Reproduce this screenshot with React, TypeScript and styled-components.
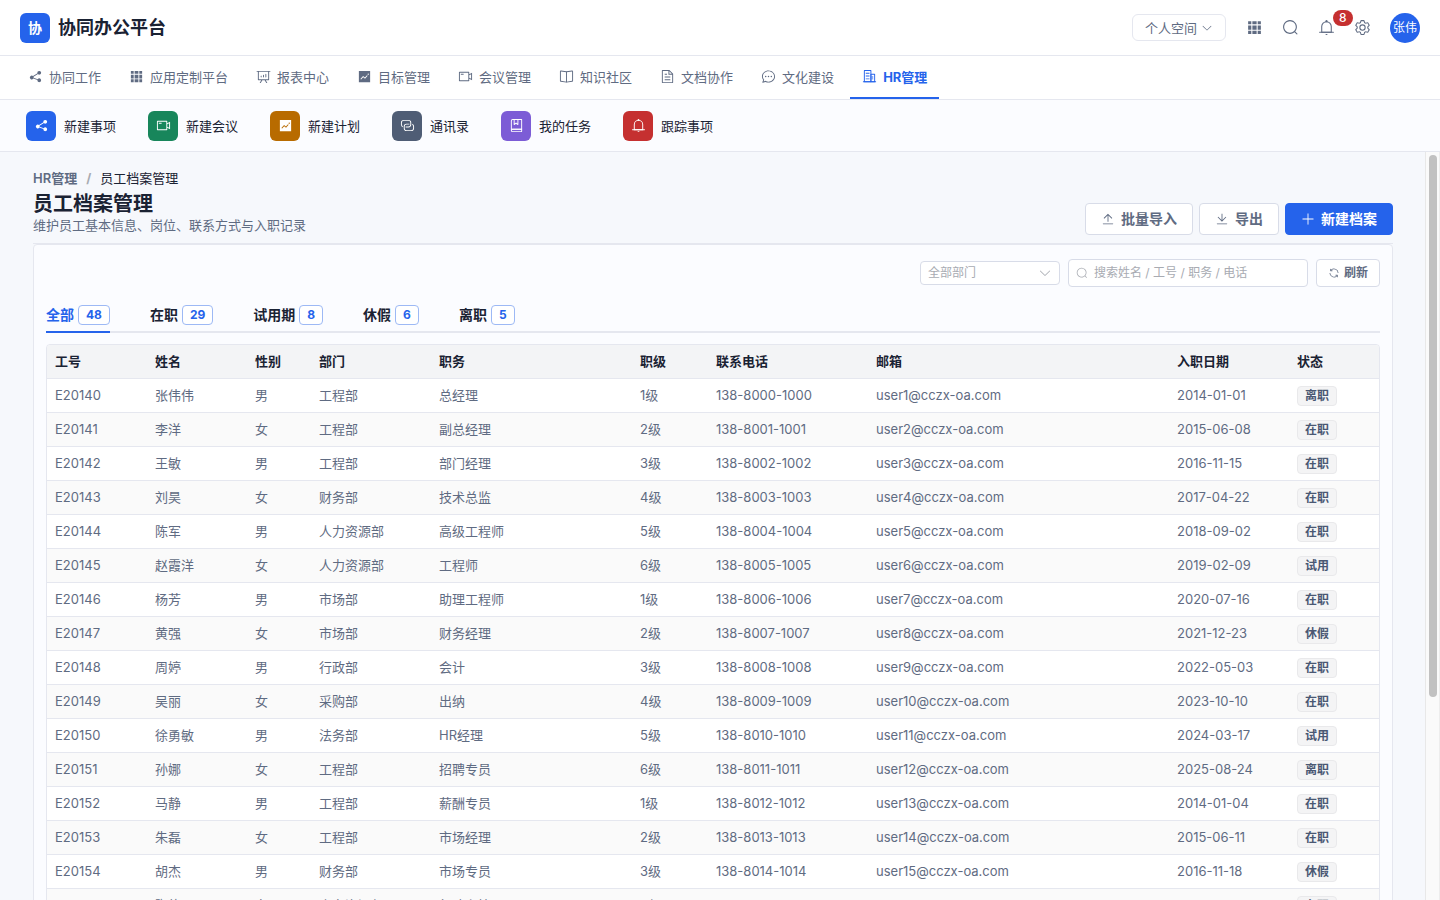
import React, { useState } from "react";
import styled, { createGlobalStyle, css } from "styled-components";

const color = {
  primary: "#2563eb",
  ink: "#1a2233",
  text: "#5f6b82",
  line: "#e5e7ef",
  control: "#d8dce8",
  hint: "#a8abb2",
  surface: "#fbfcff",
  page: "#f6f8fc",
};

const GlobalStyle = createGlobalStyle`
  *, *::before, *::after { box-sizing: border-box; }
  body {
    margin: 0;
    color: ${color.ink};
    background: ${color.page};
    font-family: Inter, "Noto Sans CJK SC", sans-serif;
    font-size: 13px;
    line-height: 20px;
  }
  button, input, select { font: inherit; color: inherit; margin: 0; }
  button { cursor: pointer; }
  a { color: inherit; text-decoration: none; }
`;

/* ---------- icons ---------- */

const icons = {
  share: [
    "m679.872 348.8-301.76 188.608a127.808 127.808 0 0 1 5.12 52.16l279.936 104.96a128 128 0 1 1-22.464 59.904l-279.872-104.96a128 128 0 1 1-16.64-166.272l301.696-188.608a128 128 0 1 1 33.92 54.272z",
  ],
  grid: [
    "M640 384v256H384V384h256zm64 0h192v256H704V384zm-64 512H384V704h256v192zm64 0V704h192v192H704zm-64-768v192H384V128h256zm64 0h192v192H704V128zM320 384v256H128V384h192zm0 512H128V704h192v192zm0-768v192H128V128h192z",
  ],
  board: [
    "m665.216 768 110.848 192h-73.856L591.36 768H433.024L322.176 960H248.32l110.848-192H160a32 32 0 0 1-32-32V192H64a32 32 0 0 1 0-64h896a32 32 0 1 1 0 64h-64v544a32 32 0 0 1-32 32H665.216zM832 192H192v512h640V192zM352 448a32 32 0 0 1 32 32v64a32 32 0 0 1-64 0v-64a32 32 0 0 1 32-32zm160-64a32 32 0 0 1 32 32v128a32 32 0 0 1-64 0V416a32 32 0 0 1 32-32zm160-64a32 32 0 0 1 32 32v192a32 32 0 1 1-64 0V352a32 32 0 0 1 32-32z",
  ],
  trend: [
    "M128 896V128h768v768H128zm291.712-327.296 128 102.4 180.16-201.792-47.744-42.624-139.84 156.608-128-102.4-180.16 201.792 47.744 42.624 139.84-156.608zM816 352a48 48 0 1 0-96 0 48 48 0 0 0 96 0z",
  ],
  video: [
    "M704 768V256H128v512h576zm64-416 192-96v512l-192-96v128a32 32 0 0 1-32 32H96a32 32 0 0 1-32-32V224a32 32 0 0 1 32-32h640a32 32 0 0 1 32 32v128zm0 71.552v176.896l128 64V359.552l-128 64zM192 320h192v64H192v-64z",
  ],
  book: [
    "m512 863.36 384-54.848v-638.72L525.568 222.72a96 96 0 0 1-27.136 0L128 169.792v638.72l384 54.848zM137.024 106.432l370.432 52.928a32 32 0 0 0 9.088 0l370.432-52.928A64 64 0 0 1 960 169.792v638.72a64 64 0 0 1-54.976 63.36l-388.48 55.488a32 32 0 0 1-9.088 0l-388.48-55.488A64 64 0 0 1 64 808.512v-638.72a64 64 0 0 1 73.024-63.36z",
    "M480 192h64v704h-64z",
  ],
  document: [
    "M832 384H576V128H192v768h640V384zm-26.496-64L640 154.496V320h165.504zM160 64h480l256 256v608a32 32 0 0 1-32 32H160a32 32 0 0 1-32-32V96a32 32 0 0 1 32-32zm160 448h384v64H320v-64zm0-192h160v64H320v-64zm0 384h384v64H320v-64z",
  ],
  chat: [
    "m174.72 855.68 135.296-45.12 23.68 11.84C388.096 849.536 448.576 864 512 864c211.84 0 384-166.784 384-352S723.84 160 512 160 128 326.784 128 512c0 69.12 24.96 139.264 70.848 199.232l22.08 28.8-46.272 115.584zm-45.248 82.56A32 32 0 0 1 89.6 896l58.368-145.92C94.72 680.32 64 596.864 64 512 64 299.904 256 96 512 96s448 203.904 448 416-192 416-448 416a461.056 461.056 0 0 1-206.912-48.384l-175.616 58.56z",
    "M512 563.2a51.2 51.2 0 1 1 0-102.4 51.2 51.2 0 0 1 0 102.4zm192 0a51.2 51.2 0 1 1 0-102.4 51.2 51.2 0 0 1 0 102.4zm-384 0a51.2 51.2 0 1 1 0-102.4 51.2 51.2 0 0 1 0 102.4z",
  ],
  office: [
    "M192 128v704h384V128H192zm-32-64h448a32 32 0 0 1 32 32v768a32 32 0 0 1-32 32H160a32 32 0 0 1-32-32V96a32 32 0 0 1 32-32z",
    "M256 256h256v64H256v-64zm0 192h256v64H256v-64zm0 192h256v64H256v-64zm384-128h128v64H640v-64zm0 128h128v64H640v-64zM64 832h896v64H64v-64z",
    "M640 384v448h192V384H640zm-32-64h256a32 32 0 0 1 32 32v512a32 32 0 0 1-32 32H608a32 32 0 0 1-32-32V352a32 32 0 0 1 32-32z",
  ],
  bell: [
    "M512 64a64 64 0 0 1 64 64v64H448v-64a64 64 0 0 1 64-64z",
    "M256 768h512V448a256 256 0 1 0-512 0v320zm256-640a320 320 0 0 1 320 320v384H192V448a320 320 0 0 1 320-320z",
    "M96 768h832q32 0 32 32t-32 32H96q-32 0-32-32t32-32zm352 128h128a64 64 0 0 1-128 0z",
  ],
  connection: [
    "M640 384v64H448a128 128 0 0 0-128 128v128a128 128 0 0 0 128 128h320a128 128 0 0 0 128-128V576a128 128 0 0 0-64-110.848V394.88c74.56 26.368 128 97.472 128 181.056v128a192 192 0 0 1-192 192H448a192 192 0 0 1-192-192V576a192 192 0 0 1 192-192h192z",
    "M384 640v-64h192a128 128 0 0 0 128-128V320a128 128 0 0 0-128-128H256a128 128 0 0 0-128 128v128a128 128 0 0 0 64 110.848v70.272A192.064 192.064 0 0 1 64 448V320a192 192 0 0 1 192-192h320a192 192 0 0 1 192 192v128a192 192 0 0 1-192 192H384z",
  ],
  collection: [
    "M192 736h640V128H256a64 64 0 0 0-64 64v544zm64-672h608a32 32 0 0 1 32 32v672a32 32 0 0 1-32 32H160l-32 57.536V192A128 128 0 0 1 256 64z",
    "M240 800a48 48 0 1 0 0 96h592v-96H240zm0-64h656v160a64 64 0 0 1-64 64H240a112 112 0 0 1 0-224zm144-608v250.88l96-76.8 96 76.8V128H384zm-64-64h320v381.44a32 32 0 0 1-51.968 24.96L480 384l-108.032 86.4A32 32 0 0 1 320 445.44V64z",
  ],
  search: [
    "m795.904 750.72 124.992 124.928a32 32 0 0 1-45.248 45.248L750.656 795.904a416 416 0 1 1 45.248-45.248zM480 832a352 352 0 1 0 0-704 352 352 0 0 0 0 704z",
  ],
  setting: [
    "M600.704 64a32 32 0 0 1 30.464 22.208l35.2 109.376c14.784 7.232 28.928 15.36 42.432 24.512l112.384-24.192a32 32 0 0 1 34.432 15.36L944.32 364.8a32 32 0 0 1-4.032 37.504l-77.12 85.12a357.12 357.12 0 0 1 0 49.024l77.12 85.248a32 32 0 0 1 4.032 37.504l-88.704 153.6a32 32 0 0 1-34.432 15.296L708.8 803.904c-13.44 9.088-27.648 17.28-42.368 24.512l-35.264 109.376A32 32 0 0 1 600.704 960H423.296a32 32 0 0 1-30.464-22.208L357.696 828.48a351.616 351.616 0 0 1-42.56-24.64l-112.32 24.256a32 32 0 0 1-34.432-15.36L79.68 659.2a32 32 0 0 1 4.032-37.504l77.12-85.248a357.12 357.12 0 0 1 0-48.896l-77.12-85.248A32 32 0 0 1 79.68 364.8l88.704-153.6a32 32 0 0 1 34.432-15.296l112.32 24.256c13.568-9.152 27.776-17.408 42.56-24.64l35.2-109.312A32 32 0 0 1 423.232 64H600.64zm-23.424 64H446.72l-36.352 113.088-24.512 11.968a294.113 294.113 0 0 0-34.816 20.096l-22.656 15.36-116.224-25.088-65.28 113.152 79.68 88.192-1.92 27.136a293.12 293.12 0 0 0 0 40.192l1.92 27.136-79.808 88.192 65.344 113.152 116.224-25.024 22.656 15.296a294.113 294.113 0 0 0 34.816 20.096l24.512 11.968L446.72 896h130.688l36.48-113.152 24.448-11.904a288.282 288.282 0 0 0 34.752-20.096l22.592-15.296 116.288 25.024 65.28-113.152-79.744-88.192 1.92-27.136a293.12 293.12 0 0 0 0-40.256l-1.92-27.136 79.808-88.128-65.344-113.152-116.288 24.96-22.592-15.232a287.616 287.616 0 0 0-34.752-20.096l-24.448-11.904L577.344 128zM512 320a192 192 0 1 1 0 384 192 192 0 0 1 0-384zm0 64a128 128 0 1 0 0 256 128 128 0 0 0 0-256z",
  ],
  down: [
    "M831.872 340.864 512 652.672 192.128 340.864a30.592 30.592 0 0 0-42.752 0 29.12 29.12 0 0 0 0 41.6L489.664 714.24a32 32 0 0 0 44.672 0l340.288-331.712a29.12 29.12 0 0 0 0-41.728 30.592 30.592 0 0 0-42.752 0z",
  ],
  upload: [
    "M160 832h704a32 32 0 1 1 0 64H160a32 32 0 1 1 0-64zm384-578.304V704h-64V247.296L237.248 490.048 192 444.8 508.8 128l316.8 316.8-45.312 45.248L544 253.696z",
  ],
  download: [
    "M160 832h704a32 32 0 1 1 0 64H160a32 32 0 1 1 0-64zm384-253.696 236.288-236.352 45.248 45.248L508.8 704 192 387.2l45.248-45.248L480 584.704V128h64v450.304z",
  ],
  plus: [
    "M480 480V128a32 32 0 0 1 64 0v352h352a32 32 0 1 1 0 64H544v352a32 32 0 1 1-64 0V544H128a32 32 0 0 1 0-64h352z",
  ],
  refresh: [
    "M771.776 794.88A384 384 0 0 1 128 512h64a320 320 0 0 0 555.712 216.448H654.72a32 32 0 1 1 0-64h149.056a32 32 0 0 1 32 32v148.928a32 32 0 1 1-64 0v-50.56zM276.288 295.616h92.992a32 32 0 0 1 0 64H220.16a32 32 0 0 1-32-32V178.56a32 32 0 0 1 64 0v50.56A384 384 0 0 1 896.128 512h-64a320 320 0 0 0-555.776-216.384z",
  ],
};

type IconName = keyof typeof icons;

const Svg = styled.svg`
  display: block;
  flex: none;
`;

function Icon({ name, size }: { name: IconName; size: number }) {
  return (
    <Svg width={size} height={size} viewBox="0 0 1024 1024" fill="currentColor" aria-hidden="true">
      {icons[name].map((d) => (
        <path key={d} d={d} />
      ))}
    </Svg>
  );
}

/* ---------- shell ---------- */

const Shell = styled.div`
  display: flex;
  flex-direction: column;
  height: 100vh;
`;

const TopBar = styled.header`
  display: flex;
  align-items: center;
  justify-content: space-between;
  flex: none;
  height: 56px;
  padding: 0 20px;
  background: #fff;
  border-bottom: 1px solid ${color.line};
`;

const Brand = styled.div`
  display: flex;
  align-items: center;
  gap: 8px;
  font-size: 18px;
  line-height: 28px;
  font-weight: 600;
`;

const BrandMark = styled.span`
  display: grid;
  place-items: center;
  width: 30px;
  height: 30px;
  border-radius: 6px;
  background: ${color.primary};
  color: #fff;
  font-size: 14px;
  font-weight: 700;
`;

const TopActions = styled.div`
  display: flex;
  align-items: center;
  gap: 12px;
`;

const SpaceButton = styled.button`
  display: flex;
  align-items: center;
  gap: 4px;
  height: 27px;
  padding: 0 12px;
  border: 1px solid ${color.line};
  border-radius: 6px;
  background: #fff;
  color: ${color.text};
`;

const IconGroup = styled.div`
  display: flex;
  gap: 4px;
`;

const IconButton = styled.button`
  position: relative;
  display: grid;
  place-items: center;
  width: 32px;
  height: 32px;
  padding: 0;
  border: 0;
  background: none;
  color: ${color.text};
`;

const CountBadge = styled.span`
  position: absolute;
  top: -2px;
  left: 23px;
  height: 16px;
  padding: 0 6px;
  border-radius: 8px;
  background: #c53030;
  color: #fff;
  font-size: 12px;
  line-height: 16px;
  font-weight: 500;
`;

const Avatar = styled.button`
  width: 30px;
  height: 30px;
  padding: 0;
  border: 0;
  border-radius: 50%;
  background: ${color.primary};
  color: #fff;
  font-size: 12px;
  white-space: nowrap;
`;

const Nav = styled.nav`
  display: flex;
  flex: none;
  gap: 4px;
  height: 44px;
  padding: 0 16px;
  background: #fff;
  border-bottom: 1px solid ${color.line};
`;

const NavLink = styled.a<{ $active?: boolean }>`
  display: flex;
  align-items: center;
  gap: 6px;
  padding: 0 12px;
  border-bottom: 2px solid ${(p) => (p.$active ? color.primary : "transparent")};
  color: ${(p) => (p.$active ? color.primary : color.text)};
  font-weight: ${(p) => (p.$active ? 700 : 400)};
  white-space: nowrap;
`;

const QuickBar = styled.div`
  display: flex;
  align-items: center;
  flex: none;
  gap: 32px;
  height: 52px;
  padding: 0 26px;
  background: ${color.surface};
  border-bottom: 1px solid ${color.line};
`;

const QuickButton = styled.button`
  display: flex;
  align-items: center;
  gap: 8px;
  padding: 0;
  border: 0;
  background: none;
  white-space: nowrap;
`;

const QuickIcon = styled.span<{ $tone: string }>`
  display: grid;
  place-items: center;
  width: 30px;
  height: 30px;
  border-radius: 6px;
  background: ${(p) => p.$tone};
  color: #fff;
`;

const Body = styled.div`
  display: flex;
  flex: 1;
  min-height: 0;
`;

const Scroller = styled.main`
  flex: 1;
  min-width: 0;
  padding: 16px 32px 16px 33px;
  overflow-y: auto;
  scrollbar-width: none;
`;

const ScrollTrack = styled.div`
  flex: none;
  width: 15px;
  padding: 3px;
  background: #fafafa;
  border-left: 1px solid #e8e8e8;
  border-right: 1px solid #ededed;
`;

const ScrollThumb = styled.div`
  height: 73%;
  width: 8px;
  border-radius: 4px;
  background: #c1c1c1;
`;

const Page = styled.div`
  max-width: 1360px;
  margin: 0 auto;
`;

/* ---------- page header ---------- */

const PageHead = styled.div`
  display: flex;
  align-items: flex-end;
  justify-content: space-between;
  padding-bottom: 8px;
  border-bottom: 1px solid ${color.line};
`;

const Crumbs = styled.nav`
  display: flex;
  gap: 9px;
`;

const CrumbLink = styled.a`
  color: ${color.text};
  font-weight: 600;
`;

const CrumbSlash = styled.span`
  color: ${color.hint};
  font-weight: 700;
`;

const Title = styled.h1`
  margin: 4px 0 0;
  font-size: 20px;
  line-height: 24px;
  font-weight: 600;
`;

const Summary = styled.p`
  margin: 0 0 1px;
  line-height: 18px;
  color: ${color.text};
`;

const ButtonRow = styled.div`
  display: flex;
  gap: 6px;
`;

const Button = styled.button<{ $primary?: boolean; $small?: boolean }>`
  display: flex;
  align-items: center;
  justify-content: center;
  gap: 6px;
  height: 32px;
  padding: 0 15px;
  border: 1px solid ${color.control};
  border-radius: 4px;
  background: #fff;
  color: ${color.text};
  font-size: 14px;
  font-weight: 600;
  white-space: nowrap;
  ${(p) =>
    p.$primary &&
    css`
      border-color: ${color.primary};
      background: ${color.primary};
      color: #fff;
    `}
  ${(p) =>
    p.$small &&
    css`
      gap: 4px;
      height: 28px;
      padding: 0 11px;
      font-size: 12px;
    `}
`;

/* ---------- card ---------- */

const Card = styled.section`
  padding: 14px 12px;
  border: 1px solid ${color.line};
  border-radius: 4px;
  background: ${color.surface};
`;

const Filters = styled.div`
  display: flex;
  align-items: center;
  justify-content: flex-end;
  gap: 8px;
  font-size: 12px;
`;

const SelectBox = styled.div`
  display: grid;
  align-items: center;
  width: 140px;
  color: ${color.hint};

  select,
  svg {
    grid-area: 1 / 1;
  }
  svg {
    justify-self: end;
    margin-right: 8px;
    pointer-events: none;
  }
`;

const Select = styled.select`
  width: 100%;
  height: 24px;
  padding: 0 7px;
  border: 1px solid ${color.control};
  border-radius: 4px;
  background: #fff;
  appearance: none;
`;

const SearchBox = styled.label`
  display: flex;
  align-items: center;
  gap: 6px;
  width: 240px;
  height: 28px;
  padding: 0 7px;
  border: 1px solid ${color.control};
  border-radius: 4px;
  background: #fff;
  color: ${color.hint};
`;

const SearchInput = styled.input`
  flex: 1;
  min-width: 0;
  padding: 0;
  border: 0;
  outline: 0;
  background: none;
  color: ${color.ink};

  &::placeholder {
    color: ${color.hint};
    opacity: 1;
  }
`;

const Tabs = styled.div`
  display: flex;
  gap: 40px;
  height: 34px;
  margin: 12px 0 11px;
  box-shadow: inset 0 -2px 0 ${color.line};
`;

const Tab = styled.button<{ $active: boolean }>`
  display: flex;
  align-items: center;
  gap: 4px;
  padding: 0;
  border: 0;
  border-bottom: 2px solid ${(p) => (p.$active ? color.primary : "transparent")};
  background: none;
  color: ${(p) => (p.$active ? color.primary : color.ink)};
  font-size: 14px;
  font-weight: 600;
`;

const TabCount = styled.span`
  height: 20px;
  padding: 0 7px;
  border: 1px solid #9db9f5;
  border-radius: 4px;
  background: #fff;
  color: ${color.primary};
  font-size: 12px;
  line-height: 18px;
  font-weight: 700;
`;

const TableFrame = styled.div`
  overflow: hidden;
  border: 1px solid ${color.line};
  border-radius: 4px;
`;

const Table = styled.table`
  width: 100%;
  table-layout: fixed;
  border-collapse: separate;
  border-spacing: 0;
`;

const Column = styled.col<{ $width?: number }>`
  width: ${(p) => (p.$width ? `${p.$width}px` : "auto")};
`;

const HeadCell = styled.th`
  height: 34px;
  padding: 0 8px 2px;
  border-bottom: 1px solid ${color.line};
  background: #f3f4f6;
  font-weight: 600;
  text-align: left;
`;

const Cell = styled.td`
  height: 34px;
  padding: 0 8px 2px;
  border-bottom: 1px solid ${color.line};
  color: ${color.text};
  white-space: nowrap;
`;

const StatusCell = styled(Cell)`
  padding-bottom: 0;
`;

const Row = styled.tr`
  background: #fff;

  &:nth-child(even) {
    background: #fafafa;
  }
`;

const StatusTag = styled.span`
  display: block;
  width: fit-content;
  height: 20px;
  padding: 0 7px;
  border: 1px solid #e9e9eb;
  border-radius: 4px;
  background: #f4f4f5;
  color: #4a5873;
  font-size: 12px;
  line-height: 18px;
  font-weight: 600;
`;

/* ---------- data ---------- */

const navItems: { label: string; icon: IconName }[] = [
  { label: "协同工作", icon: "share" },
  { label: "应用定制平台", icon: "grid" },
  { label: "报表中心", icon: "board" },
  { label: "目标管理", icon: "trend" },
  { label: "会议管理", icon: "video" },
  { label: "知识社区", icon: "book" },
  { label: "文档协作", icon: "document" },
  { label: "文化建设", icon: "chat" },
  { label: "HR管理", icon: "office" },
];

const quickItems: { label: string; icon: IconName; tone: string }[] = [
  { label: "新建事项", icon: "share", tone: "#2563eb" },
  { label: "新建会议", icon: "video", tone: "#18865b" },
  { label: "新建计划", icon: "trend", tone: "#b86b00" },
  { label: "通讯录", icon: "connection", tone: "#4f5d75" },
  { label: "我的任务", icon: "collection", tone: "#7c5cd6" },
  { label: "跟踪事项", icon: "bell", tone: "#c53030" },
];

const tabs = [
  { label: "全部", count: 48 },
  { label: "在职", count: 29 },
  { label: "试用期", count: 8 },
  { label: "休假", count: 6 },
  { label: "离职", count: 5 },
];

const columns: { label: string; width?: number }[] = [
  { label: "工号", width: 100 },
  { label: "姓名", width: 100 },
  { label: "性别", width: 64 },
  { label: "部门", width: 120 },
  { label: "职务", width: 201 },
  { label: "职级", width: 76 },
  { label: "联系电话", width: 160 },
  { label: "邮箱" },
  { label: "入职日期", width: 120 },
  { label: "状态", width: 90 },
];

const people = [
  ["张伟伟", "工程部", "总经理", "2014-01-01", "离职"],
  ["李洋", "工程部", "副总经理", "2015-06-08", "在职"],
  ["王敏", "工程部", "部门经理", "2016-11-15", "在职"],
  ["刘昊", "财务部", "技术总监", "2017-04-22", "在职"],
  ["陈军", "人力资源部", "高级工程师", "2018-09-02", "在职"],
  ["赵霞洋", "人力资源部", "工程师", "2019-02-09", "试用"],
  ["杨芳", "市场部", "助理工程师", "2020-07-16", "在职"],
  ["黄强", "市场部", "财务经理", "2021-12-23", "休假"],
  ["周婷", "行政部", "会计", "2022-05-03", "在职"],
  ["吴丽", "采购部", "出纳", "2023-10-10", "在职"],
  ["徐勇敏", "法务部", "HR经理", "2024-03-17", "试用"],
  ["孙娜", "工程部", "招聘专员", "2025-08-24", "离职"],
  ["马静", "工程部", "薪酬专员", "2014-01-04", "在职"],
  ["朱磊", "工程部", "市场经理", "2015-06-11", "在职"],
  ["胡杰", "财务部", "市场专员", "2016-11-18", "休假"],
  ["陶艳昊", "人力资源部", "行政主管", "2017-04-25", "在职"],
];

const rows = people.map(([name, dept, job, date, status], i) => ({
  id: `E${20140 + i}`,
  name,
  gender: i % 2 ? "女" : "男",
  dept,
  job,
  level: `${(i % 6) + 1}级`,
  phone: `138-${8000 + i}-${1000 + i}`,
  email: `user${i + 1}@cczx-oa.com`,
  date,
  status,
}));

export default function App() {
  const [tab, setTab] = useState("全部");

  return (
    <>
      <GlobalStyle />
      <Shell>
        <TopBar>
          <Brand>
            <BrandMark>协</BrandMark>
            协同办公平台
          </Brand>
          <TopActions>
            <SpaceButton type="button">
              个人空间
              <Icon name="down" size={12} />
            </SpaceButton>
            <IconGroup>
              <IconButton type="button" aria-label="应用">
                <Icon name="grid" size={17} />
              </IconButton>
              <IconButton type="button" aria-label="搜索">
                <Icon name="search" size={17} />
              </IconButton>
              <IconButton type="button" aria-label="通知">
                <Icon name="bell" size={17} />
                <CountBadge>8</CountBadge>
              </IconButton>
              <IconButton type="button" aria-label="设置">
                <Icon name="setting" size={17} />
              </IconButton>
            </IconGroup>
            <Avatar type="button">张伟</Avatar>
          </TopActions>
        </TopBar>

        <Nav aria-label="主导航">
          {navItems.map((item) => (
            <NavLink key={item.label} href="#" $active={item.label === "HR管理"}>
              <Icon name={item.icon} size={15} />
              {item.label}
            </NavLink>
          ))}
        </Nav>

        <QuickBar>
          {quickItems.map((item) => (
            <QuickButton key={item.label} type="button">
              <QuickIcon $tone={item.tone}>
                <Icon name={item.icon} size={15} />
              </QuickIcon>
              {item.label}
            </QuickButton>
          ))}
        </QuickBar>

        <Body>
          <Scroller>
            <Page>
              <PageHead>
                <div>
                  <Crumbs aria-label="面包屑">
                    <CrumbLink href="#">HR管理</CrumbLink>
                    <CrumbSlash>/</CrumbSlash>
                    <span>员工档案管理</span>
                  </Crumbs>
                  <Title>员工档案管理</Title>
                  <Summary>维护员工基本信息、岗位、联系方式与入职记录</Summary>
                </div>
                <ButtonRow>
                  <Button type="button">
                    <Icon name="upload" size={14} />
                    批量导入
                  </Button>
                  <Button type="button">
                    <Icon name="download" size={14} />
                    导出
                  </Button>
                  <Button type="button" $primary>
                    <Icon name="plus" size={14} />
                    新建档案
                  </Button>
                </ButtonRow>
              </PageHead>

              <Card>
                <Filters>
                  <SelectBox>
                    <Select aria-label="部门" defaultValue="">
                      <option value="">全部部门</option>
                      <option>工程部</option>
                      <option>财务部</option>
                      <option>人力资源部</option>
                      <option>市场部</option>
                    </Select>
                    <Icon name="down" size={14} />
                  </SelectBox>
                  <SearchBox>
                    <Icon name="search" size={12} />
                    <SearchInput type="text" aria-label="搜索员工" placeholder="搜索姓名 / 工号 / 职务 / 电话" />
                  </SearchBox>
                  <Button type="button" $small>
                    <Icon name="refresh" size={12} />
                    刷新
                  </Button>
                </Filters>

                <Tabs role="tablist">
                  {tabs.map((t) => (
                    <Tab
                      key={t.label}
                      type="button"
                      role="tab"
                      aria-selected={tab === t.label}
                      $active={tab === t.label}
                      onClick={() => setTab(t.label)}
                    >
                      {t.label}
                      <TabCount>{t.count}</TabCount>
                    </Tab>
                  ))}
                </Tabs>

                <TableFrame>
                  <Table>
                    <colgroup>
                      {columns.map((c) => (
                        <Column key={c.label} $width={c.width} />
                      ))}
                    </colgroup>
                    <thead>
                      <tr>
                        {columns.map((c) => (
                          <HeadCell key={c.label} scope="col">
                            {c.label}
                          </HeadCell>
                        ))}
                      </tr>
                    </thead>
                    <tbody>
                      {rows.map((r) => (
                        <Row key={r.id}>
                          <Cell>{r.id}</Cell>
                          <Cell>{r.name}</Cell>
                          <Cell>{r.gender}</Cell>
                          <Cell>{r.dept}</Cell>
                          <Cell>{r.job}</Cell>
                          <Cell>{r.level}</Cell>
                          <Cell>{r.phone}</Cell>
                          <Cell>{r.email}</Cell>
                          <Cell>{r.date}</Cell>
                          <StatusCell>
                            <StatusTag>{r.status}</StatusTag>
                          </StatusCell>
                        </Row>
                      ))}
                    </tbody>
                  </Table>
                </TableFrame>
              </Card>
            </Page>
          </Scroller>
          <ScrollTrack aria-hidden="true">
            <ScrollThumb />
          </ScrollTrack>
        </Body>
      </Shell>
    </>
  );
}
